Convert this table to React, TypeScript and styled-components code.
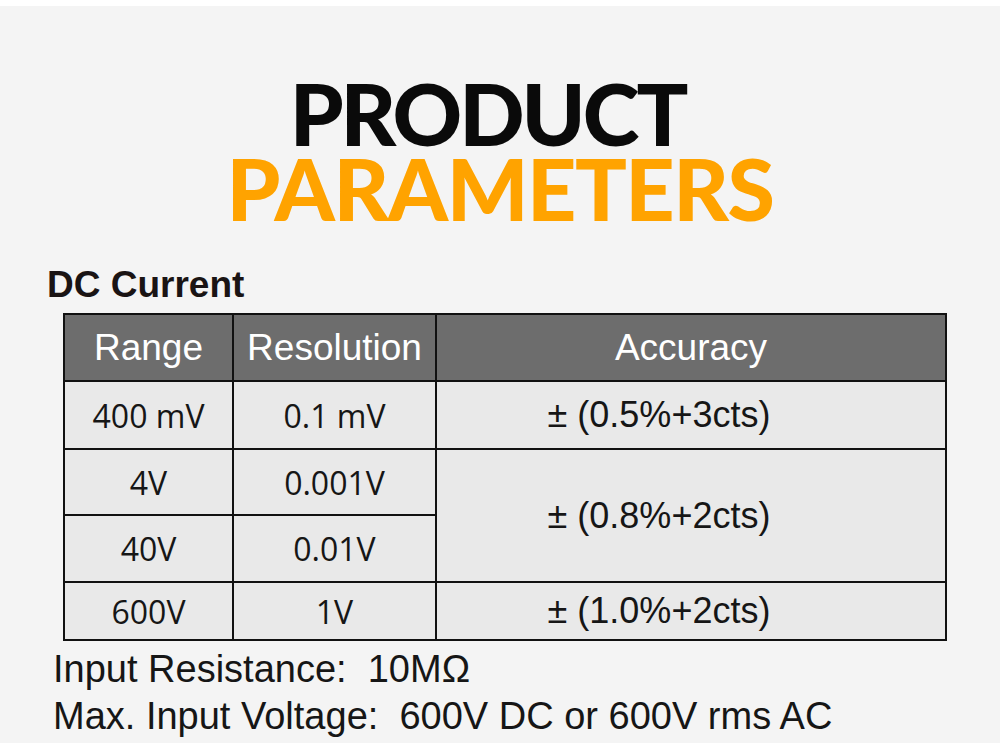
import React from 'react';
import styled, { createGlobalStyle } from 'styled-components';

const GlobalStyle = createGlobalStyle`
  html, body {
    margin: 0;
    padding: 0;
    background: #f4f4f4;
  }
`;

const Page = styled.div`
  width: 1000px;
  height: 743px;
  overflow: hidden;
  background: #f4f4f4;
  border-top: 6px solid #ffffff;
  box-sizing: border-box;
`;

const Title = styled.h1`
  margin: 69px 0 0;
  font-family: Lato, 'Open Sans', sans-serif;
  font-weight: 900;
  font-size: 86px;
  line-height: 75px;
  text-align: center;
`;

const TitleLine = styled.span<{ $accent?: boolean; $tracking: number; $nudge?: number }>`
  display: block;
  letter-spacing: ${({ $tracking }) => $tracking}px;
  padding-right: ${({ $nudge }) => $nudge ?? 0}px;
  color: ${({ $accent }) => ($accent ? '#ffa300' : '#0a0a0a')};
`;

const SectionLabel = styled.h2`
  margin: 41px 0 0 47px;
  font-family: 'Liberation Sans', Arial, sans-serif;
  font-weight: 700;
  font-size: 37px;
  line-height: 37px;
  color: #1a1414;
`;

const Table = styled.table`
  margin: 10px 0 0 63px;
  width: 884px;
  border-collapse: collapse;
  table-layout: fixed;
  border: 2px solid #111;
`;

const HeadCell = styled.th<{ $w?: number }>`
  width: ${({ $w }) => ($w ? `${$w}px` : 'auto')};
  height: 65px;
  padding: 0;
  background: #6d6d6d;
  color: #ffffff;
  border: 2px solid #111;
  font-family: 'Liberation Sans', Arial, sans-serif;
  font-weight: 400;
  font-size: 37px;
  text-align: center;
  vertical-align: middle;
`;

const Cell = styled.td<{ $h: number }>`
  height: ${({ $h }) => $h}px;
  padding: 0;
  background: #e9e9e9;
  border: 2px solid #111;
  font-family: 'Open Sans', sans-serif;
  font-size: 32px;
  color: #161616;
  text-align: center;
  vertical-align: middle;
`;

const AccuracyCell = styled(Cell)`
  font-family: 'Liberation Sans', Arial, sans-serif;
  font-size: 36px;
  padding-right: 64px;
`;

const Notes = styled.div`
  margin: 5px 0 0 53px;
  font-family: 'Liberation Sans', Arial, sans-serif;
  font-size: 38px;
  line-height: 47px;
  color: #161616;
`;

const Note = styled.div`
  white-space: pre;
`;

type Row = { range: string; resolution: string; accuracy?: string; span?: number; h: number };

const rows: Row[] = [
  { range: '400 mV', resolution: '0.1 mV', accuracy: '± (0.5%+3cts)', h: 66 },
  { range: '4V', resolution: '0.001V', accuracy: '± (0.8%+2cts)', span: 2, h: 64 },
  { range: '40V', resolution: '0.01V', h: 65 },
  { range: '600V', resolution: '1V', accuracy: '± (1.0%+2cts)', h: 56 },
];

export default function App() {
  return (
    <>
      <GlobalStyle />
      <Page>
        <Title>
          <TitleLine $tracking={-3} $nudge={25}>PRODUCT</TitleLine>
          <TitleLine $accent $tracking={-1.5}>PARAMETERS</TitleLine>
        </Title>
        <SectionLabel>DC Current</SectionLabel>
        <Table>
          <thead>
            <tr>
              <HeadCell $w={167}>Range</HeadCell>
              <HeadCell $w={201}>Resolution</HeadCell>
              <HeadCell>Accuracy</HeadCell>
            </tr>
          </thead>
          <tbody>
            {rows.map((r) => (
              <tr key={r.range}>
                <Cell $h={r.h}>{r.range}</Cell>
                <Cell $h={r.h}>{r.resolution}</Cell>
                {r.accuracy && (
                  <AccuracyCell $h={r.h} rowSpan={r.span}>
                    {r.accuracy}
                  </AccuracyCell>
                )}
              </tr>
            ))}
          </tbody>
        </Table>
        <Notes>
          <Note>{'Input Resistance:  10MΩ'}</Note>
          <Note>{'Max. Input Voltage:  600V DC or 600V rms AC'}</Note>
        </Notes>
      </Page>
    </>
  );
}
